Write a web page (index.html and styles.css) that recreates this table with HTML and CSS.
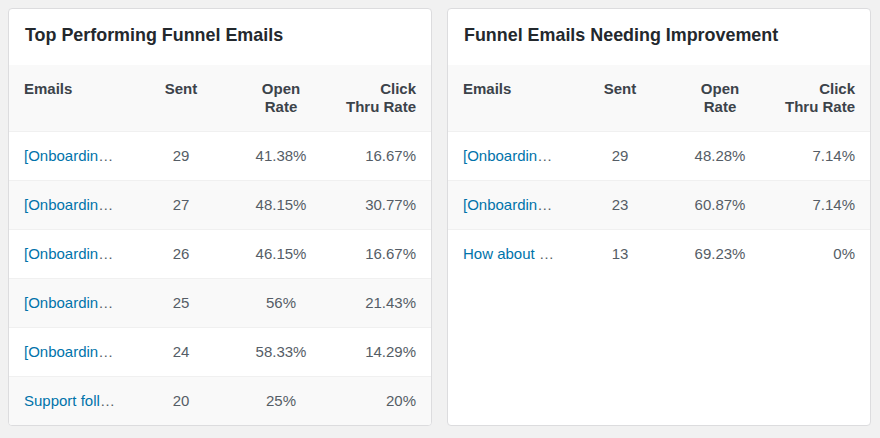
FILE: index.html
```html
<!DOCTYPE html>
<html>
<head>
<meta charset="utf-8">
<link rel="stylesheet" href="styles.css">
</head>
<body>
<div class="wrap">
  <section class="card">
    <h2 class="card-title">Top Performing Funnel Emails</h2>
    <table class="stats">
      <colgroup><col class="c1"><col class="c2"><col class="c3"><col class="c4"></colgroup>
      <thead>
        <tr><th class="left">Emails</th><th class="center">Sent</th><th class="center">Open<br>Rate</th><th class="right">Click<br>Thru Rate</th></tr>
      </thead>
      <tbody>
        <tr><td class="left"><a href="#">[Onboarding] Welcome</a></td><td class="center">29</td><td class="center">41.38%</td><td class="right">16.67%</td></tr>
        <tr><td class="left"><a href="#">[Onboarding] Day 2</a></td><td class="center">27</td><td class="center">48.15%</td><td class="right">30.77%</td></tr>
        <tr><td class="left"><a href="#">[Onboarding] Day 3</a></td><td class="center">26</td><td class="center">46.15%</td><td class="right">16.67%</td></tr>
        <tr><td class="left"><a href="#">[Onboarding] Day 4</a></td><td class="center">25</td><td class="center">56%</td><td class="right">21.43%</td></tr>
        <tr><td class="left"><a href="#">[Onboarding] Day 5</a></td><td class="center">24</td><td class="center">58.33%</td><td class="right">14.29%</td></tr>
        <tr><td class="left"><a href="#">Support follow-up</a></td><td class="center">20</td><td class="center">25%</td><td class="right">20%</td></tr>
      </tbody>
    </table>
  </section>
  <section class="card">
    <h2 class="card-title">Funnel Emails Needing Improvement</h2>
    <table class="stats">
      <colgroup><col class="c1"><col class="c2"><col class="c3"><col class="c4"></colgroup>
      <thead>
        <tr><th class="left">Emails</th><th class="center">Sent</th><th class="center">Open<br>Rate</th><th class="right">Click<br>Thru Rate</th></tr>
      </thead>
      <tbody>
        <tr><td class="left"><a href="#">[Onboarding] Day 6</a></td><td class="center">29</td><td class="center">48.28%</td><td class="right">7.14%</td></tr>
        <tr><td class="left"><a href="#">[Onboarding] Day 7</a></td><td class="center">23</td><td class="center">60.87%</td><td class="right">7.14%</td></tr>
        <tr><td class="left"><a href="#">How about a demo?</a></td><td class="center">13</td><td class="center">69.23%</td><td class="right">0%</td></tr>
      </tbody>
    </table>
  </section>
</div>
</body>
</html>
```
FILE: styles.css
```css
html, body {
  margin: 0;
  padding: 0;
  background: #f1f1f1;
}
body {
  font-family: "Liberation Sans", Arial, sans-serif;
  font-size: 15px;
  color: #555;
}
.wrap {
  display: flex;
  align-items: flex-start;
  gap: 15px;
  padding: 8px;
}
.card {
  width: 424px;
  height: 418px;
  box-sizing: border-box;
  background: #fff;
  border: 1px solid #dcdcde;
  border-radius: 4px;
  overflow: hidden;
}
.card-title {
  margin: 0;
  height: 56px;
  box-sizing: border-box;
  padding: 15px 16px 0;
  font-size: 17.9px;
  line-height: 22px;
  font-weight: bold;
  color: #23282d;
}
.stats {
  width: 100%;
  border-collapse: collapse;
  table-layout: fixed;
}
.c1 { width: 124px; }
.c2 { width: 96px; }
.c3 { width: 104px; }
.c4 { width: auto; }
.stats th {
  background: #f9f9f9;
  font-weight: bold;
  color: #3c434a;
  padding: 15px 15px 16px;
  line-height: 17.5px;
  vertical-align: top;
  white-space: nowrap;
}
.stats th.right {
  padding-left: 4px;
}
.stats td {
  padding: 15px;
  line-height: 18px;
  border-top: 1px solid #f0f0f0;
  color: #555d66;
}
.stats tbody tr:nth-child(even) td {
  background: #f9f9f9;
}
.left { text-align: left; }
.center { text-align: center; }
.right { text-align: right; }
.stats td.left {
  white-space: nowrap;
  overflow: hidden;
  text-overflow: ellipsis;
}
.stats a {
  color: #0073aa;
  text-decoration: none;
}
```
